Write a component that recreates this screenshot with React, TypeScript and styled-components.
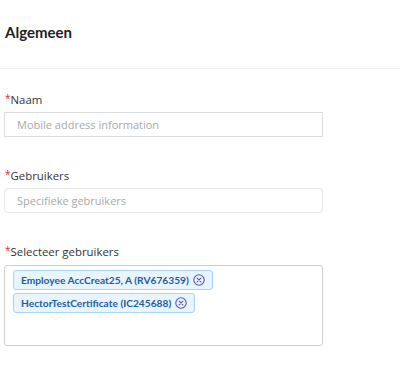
import React from "react";
import styled, { createGlobalStyle } from "styled-components";

const Global = createGlobalStyle`
  html, body { margin: 0; padding: 0; background: #fff; }
  body { font-family: "Open Sans", "Noto Sans", sans-serif; color: #333; }
`;

const Page = styled.div`
  width: 400px;
  height: 368px;
  overflow: hidden;
  background: #fff;
`;

const Header = styled.div`
  height: 69px;
  box-sizing: border-box;
  padding: 22px 0 0 5px;
  border-bottom: 1px solid #ececec;
`;

const Title = styled.h2`
  margin: 0;
  font-family: Lato, "Open Sans", sans-serif;
  font-weight: 700;
  font-size: 15px;
  line-height: 20px;
  color: #222;
`;

const Form = styled.div`
  display: flex;
  flex-direction: column;
  padding: 21px 0 0 4px;
  gap: 29px;
`;

const Field = styled.div`
  display: flex;
  flex-direction: column;
  gap: 4px;
  width: 319px;
`;

const Label = styled.label`
  font-size: 11.4px;
  line-height: 17px;
  color: #333;
  padding-left: 1px;
`;

const Req = styled.span`
  color: #e0262f;
  font-size: 10px;
  vertical-align: 2px;
`;

const Input = styled.div<{ $radius: number; $border: string }>`
  height: 25px;
  box-sizing: border-box;
  border: 1px solid ${(p) => p.$border};
  border-radius: ${(p) => p.$radius}px;
  padding: 0 12px;
  display: flex;
  align-items: center;
  font-size: 11px;
  color: #a8a8a8;
`;

const TagBox = styled.div`
  height: 81px;
  box-sizing: border-box;
  margin-top: 1px;
  border: 1px solid #cfcfcf;
  border-radius: 3px;
  padding: 4px 8px;
  display: flex;
  flex-direction: column;
  align-items: flex-start;
  gap: 3px;
`;

const Tag = styled.div`
  display: flex;
  align-items: center;
  gap: 4px;
  height: 20px;
  box-sizing: border-box;
  padding: 0 7px 0 7px;
  background: #e8f4fe;
  border: 1px solid #a9d5f6;
  border-radius: 3px;
  font-family: Lato, "Open Sans", sans-serif;
  font-size: 10.2px;
  font-weight: 700;
  color: #1d5d9e;
`;

const Close = () => (
  <svg width="12" height="12" viewBox="0 0 12 12">
    <circle cx="6" cy="6" r="5.2" fill="none" stroke="#5f58a8" strokeWidth="1.1" />
    <path d="M4.1 4.1L7.9 7.9M7.9 4.1L4.1 7.9" stroke="#5f58a8" strokeWidth="1.1" strokeLinecap="round" />
  </svg>
);

export default function App() {
  return (
    <Page>
      <Global />
      <Header>
        <Title>Algemeen</Title>
      </Header>
      <Form>
        <Field>
          <Label><Req>*</Req>Naam</Label>
          <Input $radius={0} $border="#dcdcdc">Mobile address information</Input>
        </Field>
        <Field>
          <Label><Req>*</Req>Gebruikers</Label>
          <Input $radius={4} $border="#e6e6e6">Specifieke gebruikers</Input>
        </Field>
        <Field>
          <Label><Req>*</Req>Selecteer gebruikers</Label>
          <TagBox>
            <Tag>Employee AccCreat25, A (RV676359)<Close /></Tag>
            <Tag>HectorTestCertificate (IC245688)<Close /></Tag>
          </TagBox>
        </Field>
      </Form>
    </Page>
  );
}
